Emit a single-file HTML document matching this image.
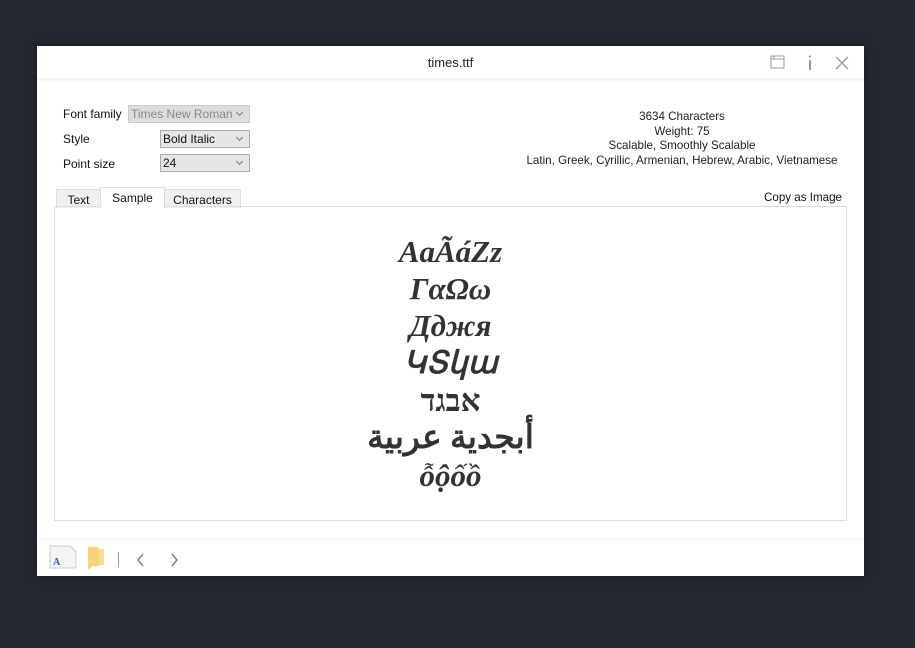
<!DOCTYPE html>
<html><head><meta charset="utf-8"><style>
body{margin:0;width:915px;height:648px;background:#242830;position:relative;overflow:hidden;font-family:"Liberation Sans","DejaVu Sans",sans-serif;font-size:12px;color:#111}
.win{position:absolute;left:37px;top:46px;width:827px;height:530px;background:#fff;box-shadow:0 0 12px rgba(0,0,0,.35)}
.title{position:absolute;left:0;top:0;width:827px;height:32px;background:#fff;box-shadow:0 2px 4px rgba(0,0,0,.08);text-align:center;line-height:34px;font-size:13px;color:#222}
.a{position:absolute;white-space:nowrap}
.combo{position:absolute;height:18px;border:1px solid #aaa;background:#e6e6e6;box-sizing:border-box;line-height:16px;padding-left:2px;font-size:12px}
.combo:after{content:"";position:absolute;right:7px;top:4px;width:4px;height:4px;border-right:1px solid #777;border-bottom:1px solid #777;transform:rotate(45deg)}
.tab{position:absolute;top:143px;height:19px;border:1px solid #ddd;border-bottom:none;background:#f0f0f0;box-sizing:border-box;text-align:center;line-height:20px}
.panel{position:absolute;left:17px;top:160px;width:793px;height:315px;border:1px solid #ddd;box-sizing:border-box}
.s{position:absolute;left:0;width:100%;text-align:center;font-family:"Liberation Serif",serif;font-weight:bold;font-style:italic;font-size:31px;color:#333;line-height:36px}
</style></head><body>
<div class="win">
<div class="title">times.ttf</div>
<svg class="a" style="left:733px;top:9px" width="16" height="14"><rect x="1" y="1" width="13" height="12" fill="none" stroke="#999"/><line x1="1" y1="4" x2="14" y2="4" stroke="#999"/><line x1="4" y1="1" x2="4" y2="4" stroke="#999"/></svg>
<svg class="a" style="left:770px;top:9px" width="6" height="16"><rect x="2" y="0.5" width="2" height="2" fill="#999"/><rect x="2" y="5" width="2" height="10" fill="#999"/></svg>
<svg class="a" style="left:798px;top:10px" width="14" height="14"><path d="M1 1L13 13M13 1L1 13" stroke="#999" stroke-width="1.4"/></svg>
<div class="a" style="left:26px;top:61px">Font family</div>
<div class="combo" style="left:91px;top:59px;width:122px;color:#888;background:#ddd;border-color:#ccc">Times New Roman</div>
<div class="a" style="left:26px;top:86px">Style</div>
<div class="combo" style="left:123px;top:84px;width:90px">Bold Italic</div>
<div class="a" style="left:26px;top:111px">Point size</div>
<div class="combo" style="left:123px;top:108px;width:90px">24</div>
<div class="a" style="left:480px;top:64px;width:330px;text-align:center;line-height:14.6px;color:#222;font-size:11.6px">3634 Characters<br>Weight: 75<br>Scalable, Smoothly Scalable<br>Latin, Greek, Cyrillic, Armenian, Hebrew, Arabic, Vietnamese</div>
<div class="a" style="left:727px;top:145px;font-size:11.6px">Copy as Image</div>
<div class="tab" style="left:19px;width:45px">Text</div>
<div class="tab" style="left:127px;width:77px">Characters</div>
<div class="tab" style="left:63px;width:65px;top:141px;height:21px;background:#fff;z-index:2">Sample</div>
<div class="panel">
<div class="s" style="top:27px">AaÃáZz</div>
<div class="s" style="top:64px">ΓαΩω</div>
<div class="s" style="top:101px">Дджя</div>
<div class="s" style="top:138px">ԿՏկա</div>
<div class="s" style="top:176px;font-style:normal">אבגד</div>
<div class="s" style="top:213px;font-size:33px;font-style:normal">أبجدية عربية</div>
<div class="s" style="top:251px">ỗộốồ</div>
</div>
<div class="a" style="left:0;top:493px;width:827px;height:1px;background:#eee"></div>
<svg class="a" style="left:12px;top:499px" width="28" height="24"><path d="M1 1H21L27 7V23H1Z" fill="#f4f4f4" stroke="#ccc"/><text x="4" y="20" font-family="Liberation Serif" font-weight="bold" font-size="10" fill="#2a5cc0">A</text></svg>
<svg class="a" style="left:50px;top:500px" width="18" height="24"><path d="M1 1H10L12 3V20H5L3 23H1Z" fill="#f3cf6b"/><path d="M1 1V23L4 19H17V3H10" fill="#f6d57a" opacity=".8"/></svg>
<div class="a" style="left:81px;top:506px;width:1px;height:15px;background:#999"></div>
<svg class="a" style="left:99px;top:507px" width="10" height="14"><path d="M7 1L2 7L7 13" fill="none" stroke="#888" stroke-width="1.6"/></svg>
<svg class="a" style="left:133px;top:507px" width="10" height="14"><path d="M2 1L7 7L2 13" fill="none" stroke="#888" stroke-width="1.6"/></svg>
</div>
</body></html>
